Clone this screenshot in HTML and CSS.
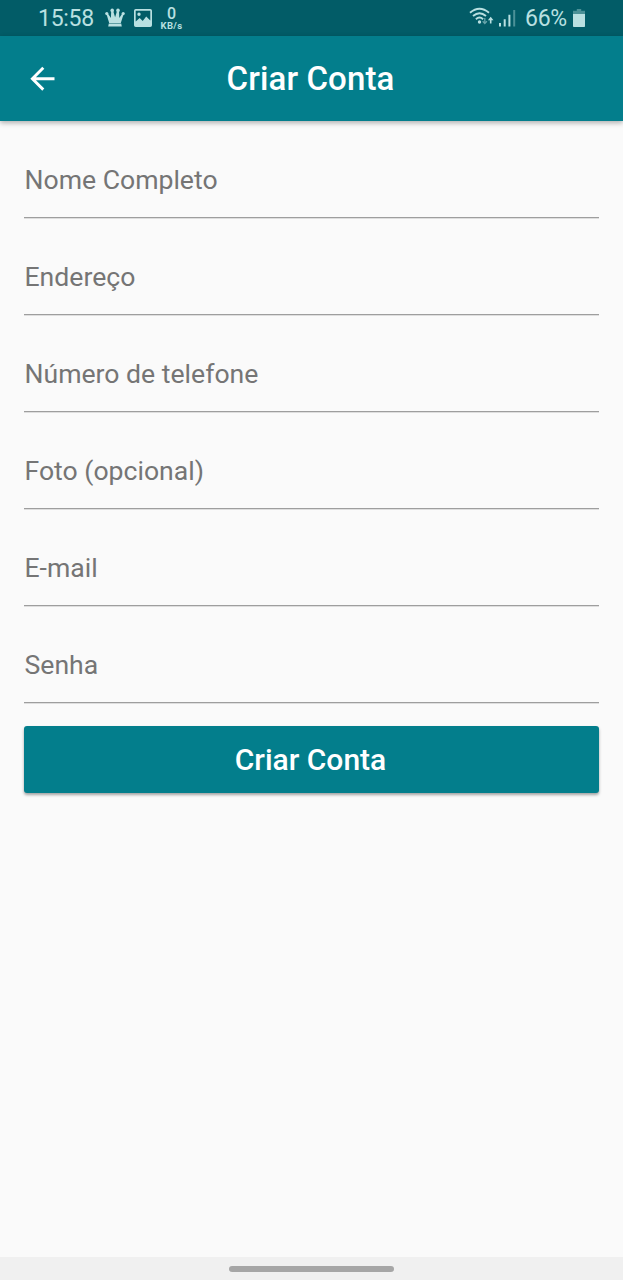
FILE: index.html
```html
<!DOCTYPE html>
<html lang="pt-BR">
<head>
<meta charset="utf-8">
<title>Criar Conta</title>
<link rel="stylesheet" href="styles.css">
</head>
<body>
<div class="screen">
  <div class="status-bar">
    <div class="status-left">
      <span class="clock">15:58</span>
      <svg class="crown" width="20" height="20" viewBox="0 0 20 20" fill="currentColor"><circle cx="1.8" cy="5.6" r="1.6"/><circle cx="7.2" cy="2.4" r="1.8"/><circle cx="13" cy="2.4" r="1.8"/><circle cx="18.2" cy="5.6" r="1.6"/><path d="M1.3 5.5 2.5 5l3.4 5L6.2 3h2l1.9 6.3L12 3h2l.3 7 3.300-5 1.200.5-3 9.500H4.200zM3.800 15.600h12.400l.6 2.900H3.200z"/></svg>
      <svg class="picture" width="18" height="18" viewBox="0 0 18 18"><path fill="currentColor" fill-rule="evenodd" d="M1.800 0h14.400Q18 0 18 1.800v14.400q0 1.800-1.800 1.800H1.800Q0 18 0 16.200V1.800Q0 0 1.800 0zM1.700 1.700v10.800l4-3.500 3 3 3.500-4.500 4.100 4V1.700zM5 3.500a1.700 1.700 0 1 1 0 3.400 1.700 1.700 0 0 1 0-3.400z"/></svg>
      <div class="net-speed"><span class="net-value">0</span><span class="net-unit">KB/s</span></div>
    </div>
    <div class="status-right">
      <svg class="wifi" width="25" height="20" viewBox="0 0 25 20" fill="none" stroke="currentColor" stroke-width="1.900"><path d="M1 5.700Q10.500-2.300 20 5.700M4 9Q10.500 3.400 17 9M6.900 12.200Q10.500 9 14.100 12.200"/><circle cx="10.500" cy="15" r="1.700" fill="currentColor" stroke="none"/><path stroke-width="1.300" opacity=".55" d="M15.800 11v5.500M13.700 14.300l2.100 2.300 2.100-2.300"/><path stroke="none" fill="currentColor" d="M21.700 9.800l2.800 3.400h-2v3.300h-1.600v-3.300h-2z"/></svg>
      <svg class="signal" width="17" height="18" viewBox="0 0 17 18" fill="currentColor"><path d="M0 14h2v3.500H0zM4.700 10.300h2v7.200h-2zM9.400 5.800h2v11.700h-2z"/><path opacity=".4" d="M14.200 1h2v16.500h-2z"/></svg>
      <span class="battery-level">66%</span>
      <svg class="battery" width="12" height="18" viewBox="0 0 12 18" fill="currentColor"><path opacity=".4" d="M3.800 0h4.400v1.700H12V5H0V1.700h3.800z"/><path d="M0 5h12v12.200q0 .8-.8.8H.8q-.8 0-.8-.8z"/></svg>
    </div>
  </div>
  <header class="app-bar">
    <svg class="back" width="26" height="26" viewBox="0 0 26 26" fill="none" stroke="currentColor" stroke-width="2.900"><path d="M25.500 12.700H4M14.300 1.800 3.400 12.700l10.900 10.900"/></svg>
    <h1 class="title">Criar Conta</h1>
  </header>
  <main class="form">
    <label class="field">Nome Completo</label>
    <label class="field">Endereço</label>
    <label class="field">Número de telefone</label>
    <label class="field">Foto (opcional)</label>
    <label class="field">E-mail</label>
    <label class="field">Senha</label>
    <button class="submit">Criar Conta</button>
  </main>
  <footer class="nav-bar"><div class="handle"></div></footer>
</div>
</body>
</html>
```
FILE: styles.css
```css
* { box-sizing: border-box; }
body { margin: 0; font-family: Roboto, sans-serif; }
.screen {
  width: 623px;
  height: 1280px;
  display: flex;
  flex-direction: column;
  background: #fafafa;
  overflow: hidden;
}
.status-bar {
  height: 36px;
  flex: none;
  display: flex;
  justify-content: space-between;
  padding: 0 38px 0 38px;
  background: #025c67;
  color: #b9e0e1;
}
.status-left, .status-right { display: flex; align-items: center; }
.clock, .battery-level { font-size: 23px; line-height: 36px; padding-top: 2px; }
.clock { width: 66.5px; letter-spacing: -0.3px; }
.crown { margin-right: 9px; }
.picture { margin-right: 8.5px; }
.net-speed {
  width: 23px;
  display: flex;
  flex-direction: column;
  align-items: center;
  font-weight: 700;
}
.net-value { font-size: 16px; line-height: 16px; font-weight: 500; }
.net-unit { font-size: 9.5px; line-height: 10px; letter-spacing: 0.4px; margin-top: -1px; }
.wifi { margin-right: 5px; margin-bottom: 2px; }
.signal { margin-right: 9px; }
.battery-level { width: 48px; letter-spacing: -0.3px; }
.app-bar {
  height: 85px;
  flex: none;
  display: grid;
  grid-template-columns: 80px 1fr 82px;
  align-items: center;
  background: #037e8c;
  color: #fff;
  box-shadow: 0 2px 5px rgba(0, 0, 0, 0.3);
}
.back { margin-left: 29px; }
.title {
  margin: 0;
  text-align: center;
  font-size: 33px;
  font-weight: 500;
  line-height: 40px;
  letter-spacing: 0.1px;
}
.form {
  flex: 1;
  padding: 0.4px 24px 0;
  display: flex;
  flex-direction: column;
}
.field {
  height: 96.93px;
  flex: none;
  padding: 43px 0 0 0.5px;
  border-bottom: 1px solid #9e9e9e;
  box-shadow: 0 1px 0 #dedede;
  color: #757575;
  font-size: 26.6px;
  line-height: 32px;
}
.submit {
  height: 67px;
  flex: none;
  margin-top: 23px;
  padding: 1px 2px 0 0;
  border: 0;
  border-radius: 3px;
  background: #037e8c;
  color: #fff;
  font: 500 30px/36px Roboto, sans-serif;
  box-shadow: 0 2px 3px rgba(0, 0, 0, 0.35);
}
.nav-bar {
  height: 23px;
  flex: none;
  display: flex;
  align-items: center;
  justify-content: center;
  background: #f0f0f0;
}
.handle { width: 165px; height: 6px; border-radius: 3px; background: #a6a6a6; }
```
